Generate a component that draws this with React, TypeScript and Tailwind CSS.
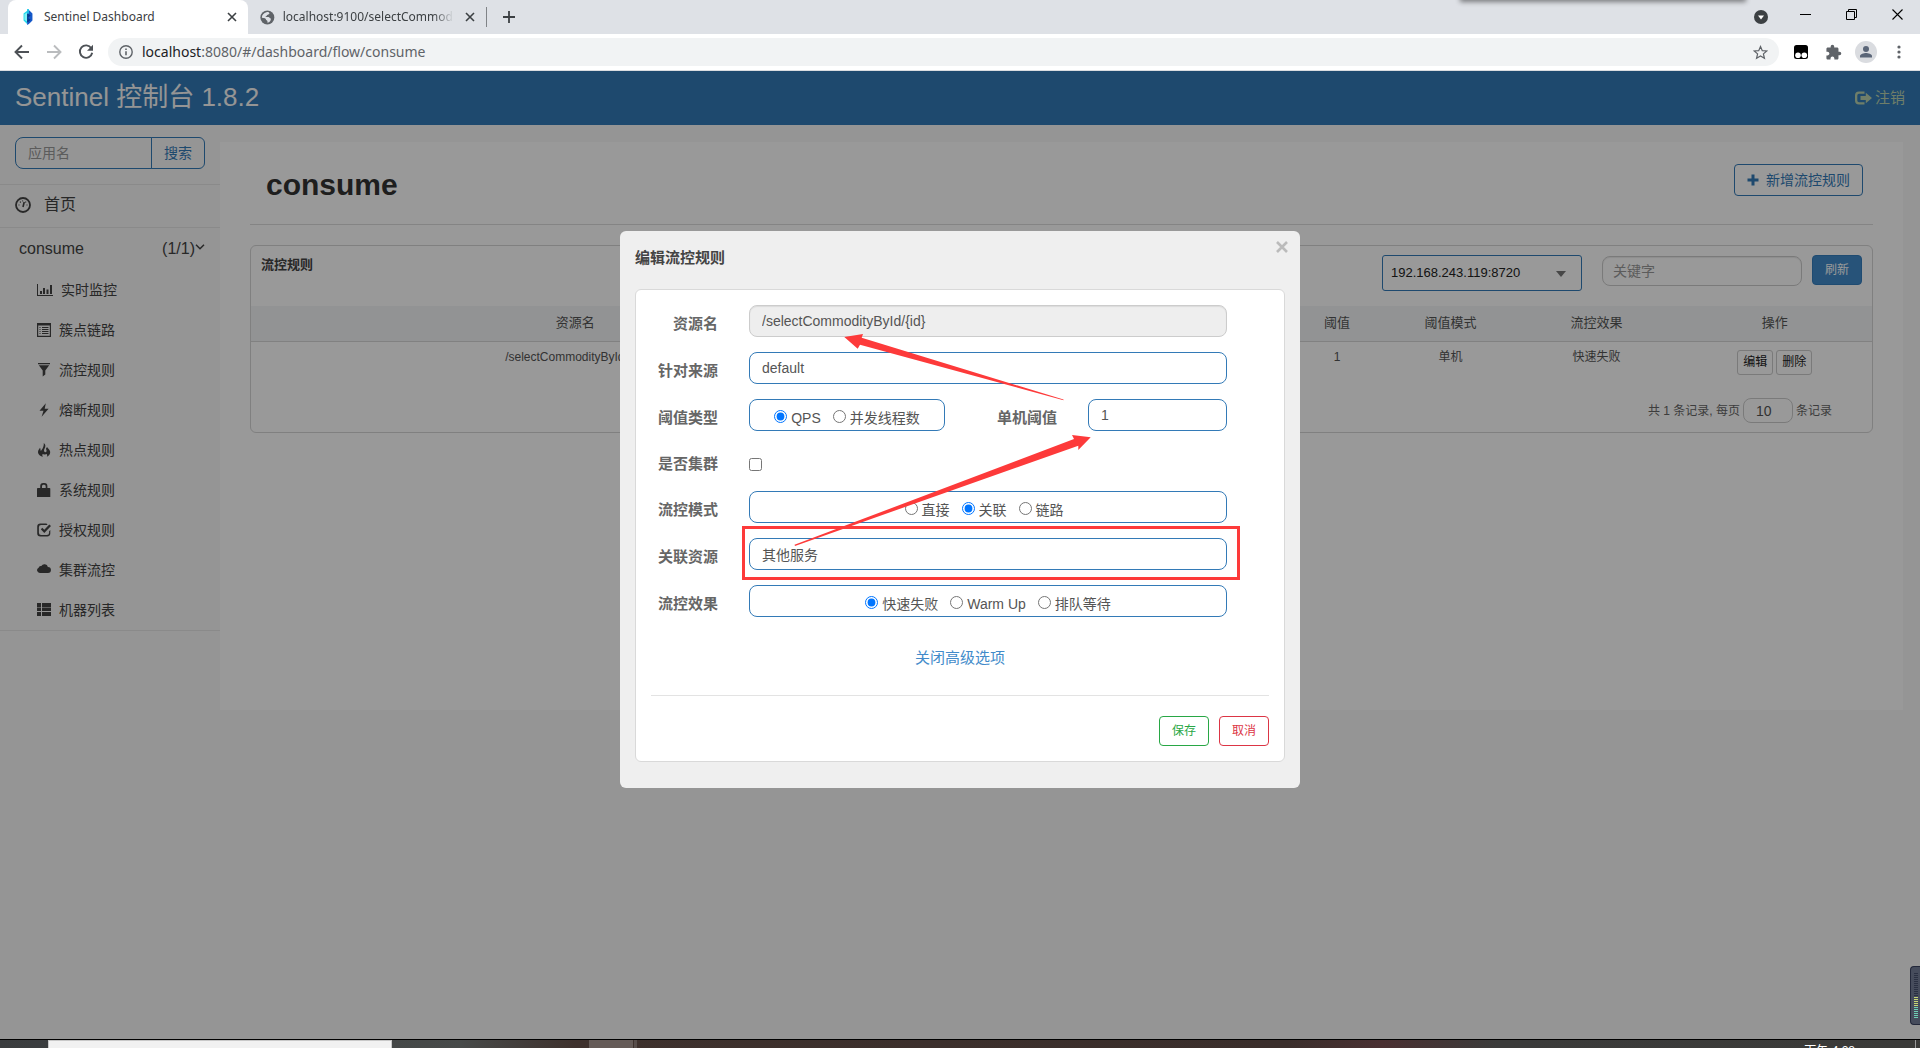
import type { ReactNode } from "react";

const cjk = "font-['Liberation_Sans','Noto_Sans_CJK_SC',sans-serif]";

function Glyph({ children, box = "0 0 16 16", className = "size-4" }: { children: ReactNode; box?: string; className?: string }) {
  return (
    <svg viewBox={box} className={className} fill="currentColor" aria-hidden="true">
      {children}
    </svg>
  );
}

function CloseMark({ className }: { className: string }) {
  return (
    <svg viewBox="0 0 10 10" className={className} fill="none" stroke="currentColor" strokeWidth="1.6" aria-hidden="true">
      <path d="M1 1l8 8M9 1l-8 8" />
    </svg>
  );
}

function TabStrip() {
  return (
    <div className="relative flex h-[34px] items-stretch overflow-hidden bg-[#dee1e6] pl-2 text-xs text-[#3c4043]">
      <div className="flex w-[240px] items-center rounded-t-lg bg-white pl-[13px] pr-2">
        <svg viewBox="0 0 14 18" className="mr-[9px] h-4 w-[14px]" aria-hidden="true">
          <path d="M2 5l4-3v15l-4-4z" fill="#22d7ea" />
          <path d="M6 2l2-1 4 4v8l-4 4-2 1z" fill="#1558c9" />
          <path d="M3 6l3-2v10l-3-2z" fill="#7ff3f5" />
          <path d="M6 5l4 2-3 3 3 2-3 3H6z" fill="#063a8c" />
          <path d="M6 0h2v5H6z" fill="#1fc8e8" />
        </svg>
        <span className="flex-1 whitespace-nowrap">Sentinel Dashboard</span>
        <button aria-label="Close tab" className="flex size-4 items-center justify-center">
          <CloseMark className="size-[10px]" />
        </button>
      </div>
      <div className="flex w-[239px] items-center pl-3">
        <svg viewBox="0 0 16 16" className="mr-2 size-[15px]" aria-hidden="true">
          <circle cx="8" cy="8" r="7.6" fill="#5f6368" />
          <path d="M7 2.2c2-.6 3 .2 3.400 1.400-1.300.5-1.100 1.600-2.700 1.700-.2 1.400-1.700 1.200-1.700 2.200h3.200c1.100 0 1.200 1.600 2.600 1.600.3 2.200-1.300 4.300-3.600 4.700-.3-1.300.3-1.900-.6-2.600-1.500-.4-1-2-2.200-2.400L2 8.200C1.900 5.200 4.200 2.800 7 2.200z" fill="#dee1e6" />
        </svg>
        <span className="mr-2 w-[175px] overflow-hidden whitespace-nowrap [mask-image:linear-gradient(to_right,black_88%,transparent)]">
          localhost:9100/selectCommodityById
        </span>
        <button aria-label="Close tab" className="flex size-4 items-center justify-center">
          <CloseMark className="size-[10px]" />
        </button>
        <span className="ml-2 h-5 w-px bg-[#808387]" />
      </div>
      <button aria-label="New tab" className="ml-2 flex w-7 items-center justify-center">
        <svg viewBox="0 0 12 12" className="size-3" stroke="#3c4043" strokeWidth="1.8" aria-hidden="true">
          <path d="M6 0v12M0 6h12" />
        </svg>
      </button>
      <div className="ml-auto flex items-center text-black">
        <svg viewBox="0 0 14 14" className="mr-8 size-[14px]" aria-hidden="true">
          <circle cx="7" cy="7" r="7" fill="#3c4043" />
          <path d="M4 5.500h6L7 9.500z" fill="#fff" />
        </svg>
        <button aria-label="Minimize" className="mb-[6px] mr-[35px] flex size-[11px] items-center">
          <span className="h-px w-full bg-black" />
        </button>
        <button aria-label="Restore" className="mb-[6px] mr-[35px]">
          <svg viewBox="0 0 11 11" className="size-[11px]" fill="none" stroke="currentColor" aria-hidden="true">
            <path d="M.5 2.500h8v8h-8zM2.500 2.500v-2h8v8h-2" />
          </svg>
        </button>
        <button aria-label="Close window" className="mb-[6px] mr-[17px]">
          <svg viewBox="0 0 11 11" className="size-[11px]" fill="none" stroke="currentColor" strokeWidth="1.100" aria-hidden="true">
            <path d="M.5.5l10 10M10.500.5l-10 10" />
          </svg>
        </button>
      </div>
      <div className="absolute right-[176px] -top-2 h-2 w-[282px] shadow-[0_0_5px_2px_rgba(0,0,0,0.45)]" />
    </div>
  );
}

function AddressBar() {
  return (
    <div className="flex h-[37px] items-center border-b border-[#dadce0] bg-white pl-[14px] pr-3 text-[#5f6368]">
      <button aria-label="Back">
        <svg viewBox="0 0 16 16" className="size-4" fill="none" stroke="#4d5156" strokeWidth="1.900" aria-hidden="true">
          <path d="M15 8H2M8 1.500L1.500 8 8 14.500" />
        </svg>
      </button>
      <button aria-label="Forward" className="ml-4">
        <svg viewBox="0 0 16 16" className="size-4" fill="none" stroke="#babcbe" strokeWidth="1.900" aria-hidden="true">
          <path d="M1 8h13M8 1.500L14.500 8 8 14.500" />
        </svg>
      </button>
      <button aria-label="Reload" className="ml-4">
        <svg viewBox="0 0 16 16" className="size-4" fill="none" stroke="#4d5156" strokeWidth="1.900" aria-hidden="true">
          <path d="M13.300 4.200A6.200 6.200 0 1 0 14.200 8.800" />
          <path d="M15 .8v6H9z" fill="#4d5156" stroke="none" />
        </svg>
      </button>
      <div className="ml-[14px] flex h-7 flex-1 items-center rounded-full bg-[#f1f3f4] pl-[11px] pr-[11px]">
        <svg viewBox="0 0 14 14" className="mr-2 size-[14px]" fill="none" stroke="currentColor" strokeWidth="1.400" aria-hidden="true">
          <circle cx="7" cy="7" r="6.200" />
          <path d="M7 6.200v4M7 3.600v1.500" strokeWidth="1.600" />
        </svg>
        <span className="flex-1 pl-px text-sm">
          <span className="text-[#202124]">localhost</span>:8080/#/dashboard/flow/consume
        </span>
        <svg viewBox="0 0 16 16" className="size-[15px]" fill="none" stroke="currentColor" strokeWidth="1.300" aria-hidden="true">
          <path d="M8 1.600l1.900 4.400 4.800.4-3.600 3.100 1.100 4.700L8 11.700l-4.200 2.500 1.100-4.700L1.300 6.400l4.800-.4z" />
        </svg>
      </div>
      <svg viewBox="0 0 14 14" className="ml-[15px] size-[14px]" aria-hidden="true">
        <rect width="14" height="14" rx="2.500" fill="#000" />
        <circle cx="4" cy="10.300" r="2.800" fill="#fff" />
        <circle cx="10.300" cy="10.300" r="2.800" fill="#fff" />
      </svg>
      <svg viewBox="0 0 24 24" className="ml-[17px] size-[17px]" fill="currentColor" aria-hidden="true">
        <path d="M20.500 11H19V7c0-1.100-.9-2-2-2h-4V3.500a2.500 2.500 0 0 0-5 0V5H4c-1.100 0-1.990.9-1.990 2v3.800H3.500c1.490 0 2.700 1.210 2.700 2.700s-1.210 2.700-2.700 2.700H2V20c0 1.100.9 2 2 2h3.800v-1.500c0-1.490 1.210-2.700 2.700-2.700s2.700 1.210 2.700 2.700V22H17c1.100 0 2-.9 2-2v-4h1.500a2.500 2.500 0 0 0 0-5z" />
      </svg>
      <svg viewBox="0 0 22 22" className="ml-[13px] size-[22px]" aria-hidden="true">
        <circle cx="11" cy="11" r="11" fill="#dadce0" />
        <circle cx="11" cy="8" r="3" fill="#5b6678" />
        <path d="M5 16.500v-1.500c0-2 4-3 6-3s6 1 6 3v1.500z" fill="#5b6678" />
      </svg>
      <svg viewBox="0 0 4 14" className="ml-5 mr-[7px] h-[14px] w-1" fill="currentColor" aria-hidden="true">
        <circle cx="2" cy="2" r="1.600" />
        <circle cx="2" cy="7" r="1.600" />
        <circle cx="2" cy="12" r="1.600" />
      </svg>
    </div>
  );
}

const menu: { label: string; icon: ReactNode }[] = [
  {
    label: "实时监控",
    icon: (
      <Glyph>
        <path d="M0 2h1v11h15v1H0zM3 9h2v3H3zM6 6h2v6H6zM9.500 7.500h2V12h-2zM13 3h2v9h-2z" />
      </Glyph>
    ),
  },
  {
    label: "簇点链路",
    icon: (
      <Glyph className="size-[14px]" box="0 0 14 14">
        <path fillRule="evenodd" d="M0 0h14v14H0zM1.200 2.500v10.300h11.600V2.500z" />
        <path d="M2.500 4h1v1h-1zM5 4h6.500v1H5zM2.500 6h1v1h-1zM5 6h6.500v1H5zM2.500 8h1v1h-1zM5 8h6.500v1H5zM2.500 10h1v1h-1zM5 10h6.500v1H5z" />
      </Glyph>
    ),
  },
  {
    label: "流控规则",
    icon: (
      <Glyph className="size-[14px]" box="0 0 14 14">
        <path d="M1 0h12v1.200H1zM1.800 2.300h10.400L8.300 7.500v4l-2.600 2v-6z" />
      </Glyph>
    ),
  },
  {
    label: "熔断规则",
    icon: (
      <Glyph className="size-[14px]" box="0 0 14 14">
        <path d="M8.800.3L2.500 7.800h4L4.600 13.700l7-7.900H7.700z" />
      </Glyph>
    ),
  },
  {
    label: "热点规则",
    icon: (
      <Glyph className="size-[14px]" box="0 0 14 14">
        <path d="M6.800 0c2 1.500 2 3.500.7 5.800C6.600 7.400 7 9 8.200 9.200c1.600.2 1.800-1.500.8-3.100 0-1 .6-1.600 1.300-2.100 0 1.300 2.900 2.600 2.900 5.300 0 2-1.400 3.700-3.400 4.500.8-1.500.3-2.600-.6-2.900-1.200.9-2.700.7-3.500.2-.7 1-.3 1.900.2 2.700C3.700 13.400 1 11.500 1 9c0-2 1.200-2.900 2-4.300.7.8.3 2.300.9 3.300C4.800 6.500 7 4.500 6.800 0z" />
      </Glyph>
    ),
  },
  {
    label: "系统规则",
    icon: (
      <Glyph className="size-[14px]" box="0 0 14 14">
        <path fillRule="evenodd" d="M3.200 5V3a3 3 0 0 1 3-3h1.200a3 3 0 0 1 3 3v2H12.500q.8 0 .8.800V14H0V5.800Q0 5 .8 5zM5 5h3.700V3.200Q8.700 1.700 7.400 1.700H6.200Q5 1.700 5 3.200z" />
      </Glyph>
    ),
  },
  {
    label: "授权规则",
    icon: (
      <Glyph className="size-[14px]" box="0 0 14 14">
        <path d="M10.600 1.900H4.200A2.300 2.300 0 0 0 1.900 4.200v5.600a2.300 2.300 0 0 0 2.300 2.300h5.600a2.300 2.300 0 0 0 2.300-2.300V8.300l1.200-1.300v3.500A3 3 0 0 1 10 13.600H3.500A3.300 3.300 0 0 1 .2 10.300V3.700A3.300 3.300 0 0 1 3.500.4h6z" />
        <path d="M3.800 6.200l1.500-1.400 2 2L12.300 1.500 14 3 7.300 9.900z" />
      </Glyph>
    ),
  },
  {
    label: "集群流控",
    icon: (
      <Glyph className="size-[14px]" box="0 0 14 14">
        <path d="M2.800 10A2.800 2.800 0 0 1 1.600 4.700 2.300 2.300 0 0 1 4.300 3a3.600 3.600 0 0 1 6.600 1A3 3 0 1 1 11 10z" />
      </Glyph>
    ),
  },
  {
    label: "机器列表",
    icon: (
      <Glyph className="size-[14px]" box="0 0 14 14">
        <path d="M0 0h4v4H0zM5 0h9v4H5zM0 4.400h4v3.600H0zM5 4.400h9v3.600H5zM0 9h4v4H0zM5 9h9v4H5z" />
      </Glyph>
    ),
  },
];

function Sidebar() {
  return (
    <aside className="w-[220px] shrink-0 text-[#444]">
      <div className="flex px-[15px] py-3 pb-[15px] text-sm">
        <input
          aria-label="应用名"
          placeholder="应用名"
          className="h-8 min-w-0 flex-1 rounded-l-lg border border-[#337ab7] px-3 placeholder:text-[#999]"
        />
        <button className="-ml-px h-8 rounded-r-md border border-[#337ab7] px-3 text-[#337ab7]">搜索</button>
      </div>
      <a href="#home" className="flex h-11 items-center border-y border-[#e7e7e7] pb-[2px] pl-[15px] text-base">
        <svg viewBox="0 0 16 16" className="mr-[13px] size-4" fill="none" stroke="currentColor" aria-hidden="true">
          <circle cx="8" cy="8" r="7" strokeWidth="1.800" />
          <path d="M8 10l1.200-5" strokeWidth="1.600" />
          <path d="M3.500 8h1M11.500 8h1M5 4.700l.8.800M11 4.700l-.6.800M7.300 3.800h.8" strokeWidth="1.200" />
        </svg>
        首页
      </a>
      <a href="#consume" className="flex h-[42px] items-center pl-[19px] pr-[15px] text-base">
        consume
        <span className="ml-auto">(1/1)</span>
        <svg viewBox="0 0 10 6" className="mb-1 h-[6px] w-[10px]" fill="none" stroke="currentColor" strokeWidth="1.500" aria-hidden="true">
          <path d="M1 .8l4 4 4-4" />
        </svg>
      </a>
      <nav className="border-b border-[#e7e7e7] text-sm">
        {menu.map((m) => (
          <a key={m.label} href="#rule" className="flex h-10 items-center gap-2 pb-px pl-[37px]">
            {m.icon}
            {m.label}
          </a>
        ))}
      </nav>
    </aside>
  );
}

function RuleTable() {
  return (
    <section className="rounded-md border border-[#d5d5d5] text-[13px] text-[#555]">
      <div className="flex h-[60px] items-start pl-[10px] pr-[10px]">
        <h2 className="mt-[9px] font-bold text-[#444]">流控规则</h2>
        <div className="relative ml-auto mt-[9px]">
          <select
            aria-label="机器"
            defaultValue="a"
            className="h-9 w-[200px] appearance-none rounded-[3px] border border-[#337ab7] bg-transparent px-2 text-[13px] text-[#222]"
          >
            <option value="a">192.168.243.119:8720</option>
          </select>
          <span className="pointer-events-none absolute right-4 top-4 border-x-[5px] border-t-[6px] border-x-transparent border-t-[#777]" />
        </div>
        <input
          aria-label="关键字"
          placeholder="关键字"
          className="ml-5 mt-[10px] h-[30px] w-[200px] rounded-lg border border-[#ccc] px-[10px] text-sm shadow-[inset_0_1px_1px_rgba(0,0,0,0.08)] placeholder:text-[#999]"
        />
        <button className="ml-[10px] mt-[9px] h-[30px] w-[50px] rounded-[4px] border border-[#357ebd] bg-[#428bca] text-xs text-white">刷新</button>
      </div>
      <table className="w-full table-fixed text-center">
        <colgroup>
          <col className="w-[40%]" />
          <col className="w-[24%]" />
          <col className="w-[6%]" />
          <col className="w-[8%]" />
          <col className="w-[10%]" />
          <col className="w-[12%]" />
        </colgroup>
        <thead className="bg-[#f3f5f7]">
          <tr className="h-[35px] border-b border-[#d8d8d8] [&>th]:pb-[2px] [&>th]:font-normal">
            <th>资源名</th>
            <td />
            <th>阈值</th>
            <th>阈值模式</th>
            <th>流控效果</th>
            <th>操作</th>
          </tr>
        </thead>
        <tbody className="text-xs">
          <tr className="h-[50px] align-top [&>td]:pt-[7px]">
            <td>/selectCommodityById/{"{id}"}</td>
            <td />
            <td>1</td>
            <td>单机</td>
            <td>快速失败</td>
            <td>
              <div className="mt-px flex justify-center gap-[3px] text-[#222]">
                <button className="h-[25px] w-9 rounded-[3px] border border-[#ccc]">编辑</button>
                <button className="h-[25px] w-9 rounded-[3px] border border-[#ccc]">删除</button>
              </div>
            </td>
          </tr>
        </tbody>
      </table>
      <div className="flex items-center justify-end gap-[3px] pb-[9px] pr-10 pt-[7px] text-xs text-[#666]">
        <label htmlFor="page-size">共 1 条记录, 每页</label>
        <input id="page-size" defaultValue="10" className="h-[25px] w-[50px] rounded-lg border border-[#ccc] px-3 text-sm text-[#555]" />
        <span>条记录</span>
      </div>
    </section>
  );
}

const fieldBox = "h-8 w-full rounded-lg border border-[#337ab7] text-sm text-[#555]";

function Row({ label, htmlFor, children }: { label: string; htmlFor?: string; children: ReactNode }) {
  return (
    <div className="flex items-center gap-[31px]">
      <label htmlFor={htmlFor} className="w-[67px] shrink-0 pt-[6px] text-right text-[15px] leading-5 font-bold text-[#666]">
        {label}
      </label>
      <div className="flex min-w-0 flex-1">{children}</div>
    </div>
  );
}

function Radios({ name, options, checked, extra = "" }: { name: string; options: string[]; checked: number; extra?: string }) {
  return (
    <div className={`${fieldBox} flex items-center justify-center gap-3 ${extra}`}>
      {options.map((o, i) => (
        <label key={o} className="flex items-center gap-1 pt-[2px]">
          <input type="radio" name={name} defaultChecked={i === checked} className="size-[13px]" />
          <span className="pt-[3px] leading-5">{o}</span>
        </label>
      ))}
    </div>
  );
}

function EditDialog() {
  return (
    <div role="dialog" aria-label="编辑流控规则" className="relative mx-auto w-full max-w-[680px] rounded-md bg-[#efefef] px-[15px] pb-[26px]">
      <div className="flex h-[58px] justify-between">
        <h2 className="mt-[17px] text-[15px] leading-5 font-bold text-[#444]">编辑流控规则</h2>
        <button aria-label="关闭" className="-mr-[3px] mt-[10px] size-3 text-[#bbb]">
          <svg viewBox="0 0 12 12" className="size-3" fill="none" stroke="currentColor" strokeWidth="2.600" aria-hidden="true">
            <path d="M1 1l10 10M11 1L1 11" />
          </svg>
        </button>
      </div>
      <form className="rounded-md border border-[#d9d9d9] bg-white px-[15px] pb-[15px] pt-[15px]">
        <div className="flex flex-col gap-[15px] pr-[42px]">
          <Row label="资源名" htmlFor="res">
            <input
              id="res"
              disabled
              defaultValue="/selectCommodityById/{id}"
              className="h-8 w-full rounded-lg border border-[#ccc] bg-[#eee] px-3 text-sm text-[#555] shadow-[inset_0_1px_1px_rgba(0,0,0,0.08)]"
            />
          </Row>
          <Row label="针对来源" htmlFor="origin">
            <input id="origin" defaultValue="default" className={`${fieldBox} px-3`} />
          </Row>
          <Row label="阈值类型">
            <div className="w-[196px] shrink-0">
              <Radios name="grade" options={["QPS", "并发线程数"]} checked={0} />
            </div>
            <label htmlFor="count" className="flex-1 pr-[31px] pt-[9px] text-right text-[15px] leading-5 font-bold text-[#666]">
              单机阈值
            </label>
            <div className="w-[139px] shrink-0">
              <input id="count" defaultValue="1" className={`${fieldBox} px-3`} />
            </div>
          </Row>
          <div className="flex h-[30px] items-center">
            <Row label="是否集群" htmlFor="cluster">
              <input id="cluster" type="checkbox" className="mt-[6px] size-[13px]" />
            </Row>
          </div>
          <Row label="流控模式">
            <Radios name="mode" options={["直接", "关联", "链路"]} checked={1} extra="pr-2" />
          </Row>
          <Row label="关联资源" htmlFor="ref">
            <input id="ref" defaultValue="其他服务" className={`${fieldBox} px-3`} />
          </Row>
          <Row label="流控效果">
            <Radios name="effect" options={["快速失败", "Warm Up", "排队等待"]} checked={0} />
          </Row>
        </div>
        <div className="mt-[31px] border-b border-[#e3e3e3] pb-[27px] text-center text-[15px] leading-5">
          <a href="#advanced" className="text-[#428bca]">
            关闭高级选项
          </a>
        </div>
        <div className="mt-5 flex justify-end gap-[10px] text-xs">
          <button type="button" className="h-[30px] w-[50px] rounded-[4px] border border-[#28a745] text-[#28a745]">
            保存
          </button>
          <button type="button" className="h-[30px] w-[50px] rounded-[4px] border border-[#dc3545] text-[#dc3545]">
            取消
          </button>
        </div>
      </form>
      <svg viewBox="620 231 680 557" className="pointer-events-none absolute left-0 top-0 h-[557px] w-[680px]" fill="#fd3a3a" aria-hidden="true">
        <path d="M844.300 337L863 334l-1.300 3.700L1063.500 399.600v.6L860 344.700l-2.300 4z" />
        <path d="M794.500 544.800L1074 439l-2-4 18.700 2.300L1078.300 450v-4.300L795 545.900z" />
        <rect x="743.500" y="527.500" width="495" height="51" fill="none" stroke="#fd3a3a" strokeWidth="3" />
      </svg>
    </div>
  );
}

function SideMeter() {
  const bars = Array.from({ length: 23 }, (_, i) => i);
  return (
    <div className="absolute bottom-[14px] right-0 flex h-[59px] w-[10px] flex-col justify-center gap-px rounded-l border border-r-0 border-[#23283a] bg-[#464c5c] pl-[3px]">
      {bars.map((i) => (
        <span key={i} className={i < 12 ? "h-px w-1 bg-[#2a3042]" : i < 17 ? "h-px w-1 bg-[#c6d675]" : "h-px w-1 bg-[#6ecfb4]"} />
      ))}
    </div>
  );
}

function Taskbar() {
  return (
    <div className="relative flex h-[9px] overflow-hidden border-t border-black bg-[linear-gradient(to_right,#3a3c3e_0%,#474a49_24%,#3e312d_30%,#3a2e2b_67%,#4a3032_72%,#3b3b3a_78%,#3a3a38_100%)]">
      <span className="ml-12 w-[344px] border border-b-0 border-[#c8c8c8] bg-[#f1f1f1]" />
      <span className="ml-[197px] w-11 bg-[#655b58]" />
      <span className="ml-px w-[3px] bg-[#574d4a]" />
      <span className="ml-auto mr-[65px] mt-[3px] whitespace-nowrap text-xs leading-4 text-white">下午 4:28</span>
      <span className="absolute right-1 h-full w-px bg-[#999]" />
    </div>
  );
}

export default function App() {
  return (
    <div className={`flex min-h-screen flex-col ${cjk}`}>
      <div className="font-['Noto_Sans','Noto_Sans_CJK_SC',sans-serif]">
        <TabStrip />
        <AddressBar />
      </div>
      <div className="relative flex flex-1 flex-col bg-[#f8f8f8]">
        <header className="flex h-[54px] items-center justify-between bg-[#337ab7] px-[15px]">
          <h1 className="pb-[2px] text-[26px] text-[#f8f8f8]">Sentinel 控制台 1.8.2</h1>
          <a href="#logout" className="flex items-center gap-[3px] text-[15px] text-[#b9d3b0]">
            <svg viewBox="0 0 17 14" className="h-[14px] w-[17px]" fill="currentColor" aria-hidden="true">
              <path d="M9.500.5v2.200H4Q2.300 2.700 2.300 4.400v5.200q0 1.700 1.700 1.700h5.500v2.200H4Q0 13.500 0 9.600V4.400Q0 .5 4 .5z" />
              <path d="M5.500 5h5.300V1.800L17 7l-6.200 5.200V9H5.500z" />
            </svg>
            注销
          </a>
        </header>
        <div className="flex flex-1">
          <Sidebar />
          <main className="mr-[17px] mt-[17px] min-h-[568px] flex-1 self-start bg-white px-[30px]">
            <div className="mb-5 flex h-[83px] items-start justify-between border-b border-[#ddd] pl-4 pr-[10px] pt-[22px]">
              <h1 className="pt-px text-[30px] leading-10 font-bold text-[#333]">consume</h1>
              <button className="flex h-8 items-center gap-[7px] rounded-[4px] border border-[#337ab7] px-3 text-sm text-[#337ab7]">
                <svg viewBox="0 0 12 12" className="size-3" stroke="currentColor" strokeWidth="3" aria-hidden="true">
                  <path d="M6 .5v11M.5 6h11" />
                </svg>
                新增流控规则
              </button>
            </div>
            <RuleTable />
          </main>
        </div>
        <div className="absolute inset-0 bg-black/40 pt-[160px]">
          <EditDialog />
        </div>
        <SideMeter />
      </div>
      <Taskbar />
    </div>
  );
}
